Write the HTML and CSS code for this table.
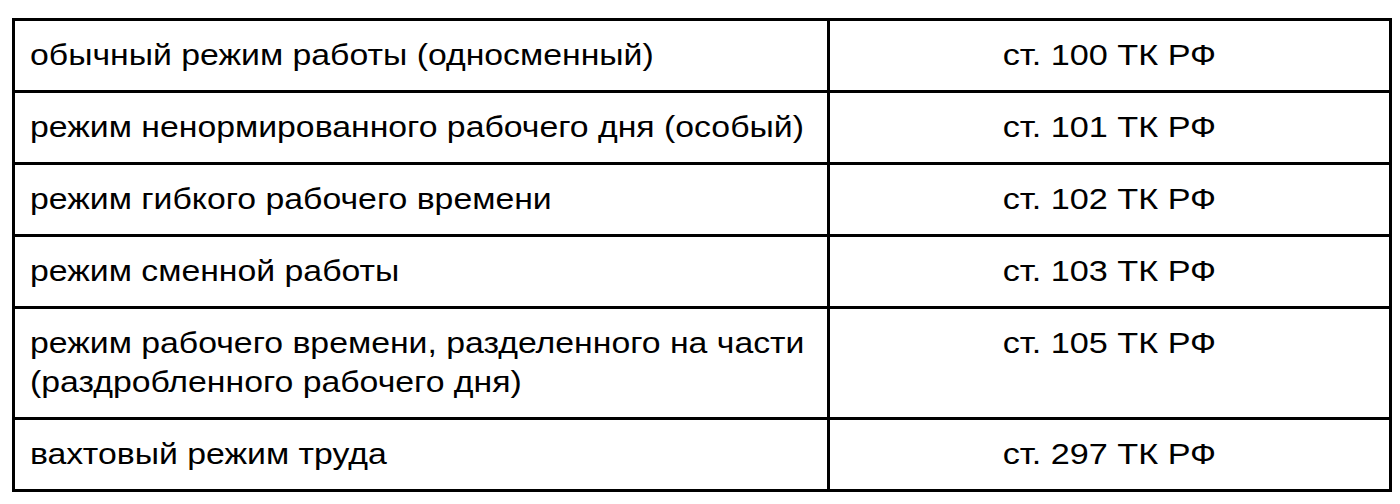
FILE: index.html
```html
<!DOCTYPE html>
<html lang="ru">
<head>
<meta charset="utf-8">
<link rel="stylesheet" href="styles.css">
</head>
<body>
<table class="modes">
  <colgroup><col class="c-name"><col class="c-ref"></colgroup>
  <tbody>
    <tr><td class="name"><span class="txt">обычный режим работы (односменный)</span></td><td class="ref"><span class="txt">ст. 100 ТК РФ</span></td></tr>
    <tr><td class="name"><span class="txt">режим ненормированного рабочего дня (особый)</span></td><td class="ref"><span class="txt">ст. 101 ТК РФ</span></td></tr>
    <tr><td class="name"><span class="txt">режим гибкого рабочего времени</span></td><td class="ref"><span class="txt">ст. 102 ТК РФ</span></td></tr>
    <tr><td class="name"><span class="txt">режим сменной работы</span></td><td class="ref"><span class="txt">ст. 103 ТК РФ</span></td></tr>
    <tr><td class="name"><span class="txt">режим рабочего времени, разделенного на части<br>(раздробленного рабочего дня)</span></td><td class="ref"><span class="txt">ст. 105 ТК РФ</span></td></tr>
    <tr><td class="name"><span class="txt">вахтовый режим труда</span></td><td class="ref"><span class="txt">ст. 297 ТК РФ</span></td></tr>
  </tbody>
</table>
</body>
</html>
```

FILE: styles.css
```css
html, body {
  margin: 0;
  padding: 0;
  background: #fff;
}
body {
  padding: 18px 0 0 12px;
  font-family: "Liberation Sans", Arial, sans-serif;
  color: #000;
}
.modes {
  border-collapse: separate;
  border-spacing: 0;
  table-layout: fixed;
  width: 1380px;
  border-top: 3px solid #000;
  border-left: 3px solid #000;
}
.c-name { width: 815px; }
.c-ref { width: 562px; }
.modes td {
  box-sizing: border-box;
  border-right: 3px solid #000;
  border-bottom: 3px solid #000;
  padding: 15px 15px;
  font-size: 29px;
  line-height: 39px;
  vertical-align: top;
  white-space: nowrap;
}
.txt {
  display: inline-block;
  transform: scaleX(1.165);
  transform-origin: left top;
}
.ref {
  text-align: center;
}
.ref .txt {
  transform: scaleX(1.18);
  transform-origin: center top;
}
```
